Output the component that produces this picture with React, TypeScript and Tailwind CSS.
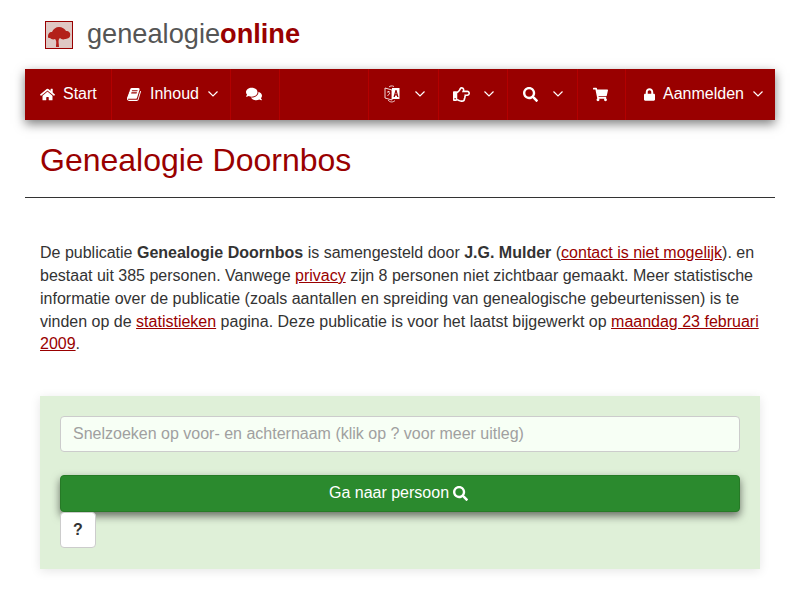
import {
  FaHome,
  FaComments,
  FaRegHandPointRight,
  FaSearch,
  FaShoppingCart,
  FaLock,
} from "react-icons/fa";

function TreeLogo() {
  return (
    <svg viewBox="0 0 28 28" className="h-[28px] w-[28px] shrink-0">
      <rect x="0.5" y="0.5" width="27" height="27" fill="#dfc8c4" stroke="#990000" />
      <g className="blur-[0.5px]">
        <path
          d="M3 16c0-3 1-5 4-5 1-3 4-5 7-5 3 0 6 2 7 4 3 0 5 2 4 5 0 2-3 3-5 3-2 1-4 0-5-1l-1 1c-1 2 0 5 0 8h-3c0-3 1-6-1-8-2 1-4 0-5-1-1 0-2 0-2-1z"
          fill="#b3201a"
        />
      </g>
    </svg>
  );
}

function BookIcon() {
  return (
    <svg viewBox="0 0 1792 1792" fill="currentColor" className="mr-[8px] h-[15px] w-[15px]">
      <path d="M1639 478q40 57 18 129l-275 906q-19 64-76.5 107.5t-122.5 43.5h-923q-77 0-148.5-53.5t-99.5-131.5q-24-67-2-127 0-4 3-27t4-37q1-8-3-21.5t-3-19.5q2-11 8-21t16.5-23.5 16.5-23.5q23-38 45-91.5t30-91.5q3-10 .5-30t-.5-28q3-11 17-28t17-23q21-36 42-92t25-90q1-9-2.5-32t.5-28q4-13 22-30.5t22-22.5q19-26 42.5-84.5t27.5-96.5q1-8-3-25.5t-2-26.5q2-8 9-18t18-23 17-21q8-12 16.5-30.5t15-35 16-36 19.5-32 26.5-23.5 36-11.5 47.5 5.5l-1 3q38-9 51-9h761q74 0 114 56t18 130l-274 906q-36 119-71.5 153.5t-128.5 34.5h-869q-27 0-38 15-11 16-1 43 24 70 144 70h923q29 0 56-15.5t35-41.5l300-987q7-22 5-57 38 15 59 43zm-1064 2q-4 13 2 22.5t20 9.5h608q13 0 25.5-9.5t16.5-22.5l21-64q4-13-2-22.5t-20-9.5h-608q-13 0-25.5 9.5t-16.5 22.5zm-83 256q-4 13 2 22.5t20 9.5h608q13 0 25.5-9.5t16.5-22.5l21-64q4-13-2-22.5t-20-9.5h-608q-13 0-25.5 9.5t-16.5 22.5z" />
    </svg>
  );
}

// translate icon: outlined page on the left, solid page with a letter shape on the right
function LanguageIcon() {
  return (
    <svg viewBox="0 0 16 18" className="h-[18px] w-[16px]">
      <path d="M1 3l7 2v10l-7-2z" fill="none" stroke="#fff" strokeWidth="1" opacity="0.85" />
      <path d="M3 7h3M4.500 6v1M3.500 11l2.500-3" stroke="#fff" strokeWidth="0.8" fill="none" />
      <path d="M8 3h7.500v11H8z" fill="#fff" />
      <path d="M9.500 12l2-7h1l2 7h-1.300l-.4-1.600h-1.600l-.4 1.600zm2-2.800h1l-.5-2z" fill="#990000" />
      <path d="M4 15c2 2.500 5 2.500 7 .5M5 2c1-1.200 3-1.500 5-.5" stroke="#fff" strokeWidth="0.8" fill="none" />
    </svg>
  );
}

function Caret({ className }: { className: string }) {
  return (
    <svg viewBox="0 0 12 8" className={`h-[8px] w-[12px] shrink-0 ${className}`}>
      <path d="M1.500 1.500L6 6l4.500-4.500" fill="none" stroke="#fff" strokeWidth="1.200" />
    </svg>
  );
}

function NavItem({ children, className }: { children: React.ReactNode; className: string }) {
  return (
    <div className={`flex h-full items-center border-r border-[#b30000] pb-[1px] ${className}`}>
      {children}
    </div>
  );
}

export default function App() {
  return (
    <div className="min-h-[600px] bg-white font-['Liberation_Sans',Arial,sans-serif] text-[16px] leading-[22.857px] text-[#333]">
      <div className="mx-[25px]">
        <div className="flex h-[69px] items-center pl-[20px]">
          <TreeLogo />
          <div className="mb-[2px] ml-[14px] text-[27.2px] leading-[32px] text-[#555]">
            genealogie<span className="font-bold text-[#990000]">online</span>
          </div>
        </div>

        <nav className="flex h-[51px] items-center justify-between bg-[#990000] text-white shadow-[0_4px_10px_rgba(0,0,0,0.5)]">
          <div className="flex h-full">
            <NavItem className="w-[87px] pl-[15px]">
              <FaHome className="mr-[8px] h-[15px] w-[15px]" />
              Start
            </NavItem>
            <NavItem className="w-[119px] pl-[15px]">
              <BookIcon />
              Inhoud
              <Caret className="ml-[8px]" />
            </NavItem>
            <NavItem className="w-[49px] pl-[15px]">
              <FaComments className="h-[16px] w-[16px]" />
            </NavItem>
          </div>
          <div className="flex h-full">
            <NavItem className="w-[71px] border-l border-l-[#b30000] pl-[15px]">
              <LanguageIcon />
              <Caret className="ml-[14px]" />
            </NavItem>
            <NavItem className="w-[69px] pl-[14px]">
              <FaRegHandPointRight className="h-[17px] w-[17px]" />
              <Caret className="ml-[13px]" />
            </NavItem>
            <NavItem className="w-[70px] pl-[15px]">
              <FaSearch className="h-[15px] w-[15px]" />
              <Caret className="ml-[14px]" />
            </NavItem>
            <NavItem className="w-[48px] pl-[15px]">
              <FaShoppingCart className="h-[15px] w-[15px]" />
            </NavItem>
            <div className="flex h-full w-[149px] items-center pb-[1px] pl-[18px]">
              <FaLock className="mr-[8px] h-[13px] w-[11px]" />
              Aanmelden
              <Caret className="ml-[8px]" />
            </div>
          </div>
        </nav>

        <h1 className="border-b border-[#333] px-[15px] pb-[18px] pt-[22px] text-[32px] leading-[37px] text-[#990000]">
          Genealogie Doornbos
        </h1>

        <p className="mt-[44px] px-[15px]">
          De publicatie <b>Genealogie Doornbos</b> is samengesteld door <b>J.G. Mulder</b> (
          <a className="text-[#990000] underline">contact is niet mogelijk</a>). en bestaat uit 385
          personen. Vanwege <a className="text-[#990000] underline">privacy</a> zijn 8 personen niet
          zichtbaar gemaakt. Meer statistische informatie over de publicatie (zoals aantallen en
          spreiding van genealogische gebeurtenissen) is te vinden op de{" "}
          <a className="text-[#990000] underline">statistieken</a> pagina. Deze publicatie is voor
          het laatst bijgewerkt op{" "}
          <a className="text-[#990000] underline">maandag 23 februari 2009</a>.
        </p>

        <div className="mx-[15px] mt-[40px] bg-[#dff0d8] px-[20px] pb-[21px] pt-[20px] shadow-[0_2px_10px_rgba(0,0,0,0.1)]">
          <input
            className="block h-[36px] w-full rounded-[4px] border border-[#ccc] bg-[#f7fff5] px-[12px] text-[16px] placeholder:text-[#a0a0a0]"
            placeholder="Snelzoeken op voor- en achternaam (klik op ? voor meer uitleg)"
          />
          <button className="mt-[23px] flex h-[37px] w-full items-center justify-center rounded-[4px] border border-[#267a26] bg-[#2b8a2e] pr-[3px] text-white shadow-[0_4px_8px_rgba(0,0,0,0.55)]">
            Ga naar persoon
            <FaSearch className="ml-[4px] h-[15px] w-[15px]" />
          </button>
          <button className="block h-[36px] w-[36px] rounded-[4px] border border-[#ccc] bg-white font-bold">
            ?
          </button>
        </div>
      </div>
    </div>
  );
}
